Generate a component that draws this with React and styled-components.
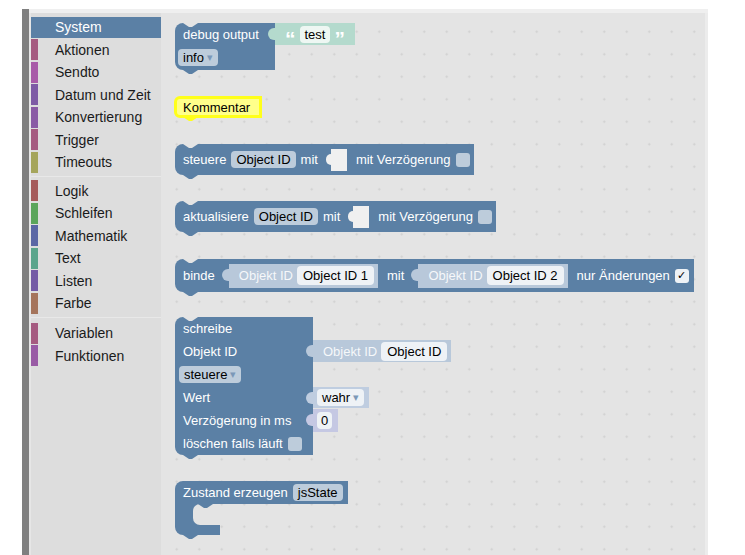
import React from 'react';
import styled, { createGlobalStyle, css } from 'styled-components';

const BLUE = '#5b80a5';
const WS = '#e4e4e4';
const FIELD = '#bdccdb';
const LIGHT_FIELD = '#eef2f6';
const SHADOW = '#b8c8da';

const Global = createGlobalStyle`
  html, body { margin: 0; padding: 0; background: #fff; }
  body { font-family: 'Liberation Sans', Arial, sans-serif; }
`;

const Frame = styled.div`
  display: flex;
  margin: 9px 0 0 22px;
  width: 686px;
  height: 546px;
`;
const LeftBar = styled.div`
  width: 7px;
  flex-shrink: 0;
  background: #808080;
`;
const Main = styled.div`
  flex: 1;
  display: flex;
  flex-direction: column;
`;
const TopStrip = styled.div`
  height: 4px;
  flex-shrink: 0;
  background: #efefef;
`;
const Content = styled.div`
  flex: 1;
  display: flex;
  min-height: 0;
`;
const Toolbox = styled.nav`
  width: 132px;
  flex-shrink: 0;
  box-sizing: border-box;
  background: #dddddd;
  border-left: 2px solid #e6e6e6;
  padding-top: 3.5px;
`;
const Category = styled.div`
  display: flex;
  align-items: center;
  height: 21px;
  margin-bottom: 1.5px;
  font-size: 14px;
  background: ${p => (p.$selected ? BLUE : 'transparent')};
  color: ${p => (p.$selected ? '#fff' : '#1a1a1a')};
`;
const Stripe = styled.span`
  width: 7px;
  align-self: stretch;
  margin-right: 17px;
  background: ${p => p.$color};
`;
const Separator = styled.div`
  height: 1px;
  margin: ${p => p.$top}px 0 ${p => p.$bottom}px 0;
  background: #e8e8e8;
`;

const Workspace = styled.main`
  flex: 1;
  position: relative;
  overflow: hidden;
  background-color: ${WS};
  background-image: radial-gradient(circle, #cfcfcf 0.8px, transparent 1.4px);
  background-size: 22.5px 22.5px;
  background-position: 4.5px 7.5px;
  box-shadow: inset -3px 0 0 #ececec;
`;

const Block = styled.div`
  position: absolute;
  left: ${p => p.$x}px;
  top: ${p => p.$y}px;
  display: flex;
  flex-direction: column;
  font-size: 13px;
  color: #fff;
`;
const Row = styled.div`
  display: flex;
  align-items: flex-start;
`;

const notchShape = 'polygon(0 0, 100% 0, 60% 100%, 40% 100%)';

const Body = styled.div`
  position: relative;
  box-sizing: border-box;
  display: flex;
  align-items: center;
  gap: 5px;
  flex-shrink: 0;
  white-space: nowrap;
  width: ${p => (p.$w ? `${p.$w}px` : 'auto')};
  height: ${p => p.$h}px;
  padding: 0 ${p => p.$pr ?? 5}px 0 ${p => p.$pl ?? 8}px;
  background: ${p => p.$color || BLUE};
  border-top-left-radius: ${p => (p.$first ? '8px' : '0')};
  border-bottom-left-radius: ${p => (p.$last ? '8px' : '0')};
  ${p =>
    p.$notch &&
    css`
      &::before {
        content: '';
        position: absolute;
        top: 0;
        left: 8px;
        width: 15px;
        height: 4px;
        background: ${WS};
        clip-path: ${notchShape};
      }
    `}
  ${p =>
    p.$tab &&
    css`
      &::after {
        content: '';
        position: absolute;
        bottom: -4px;
        left: ${p.$tabLeft ?? 8}px;
        width: 15px;
        height: 4px;
        background: ${p.$color || BLUE};
        clip-path: ${notchShape};
      }
    `}
`;

const CommentBody = styled(Body)`
  color: #000;
  border: 3px solid #ffff1a;
  border-radius: 6px 0 0 6px;
  &::after {
    bottom: -6px;
    left: 6px;
    background: #ffff1a;
  }
`;

const Field = styled.span`
  display: inline-flex;
  align-items: center;
  flex-shrink: 0;
  height: ${p => p.$h || 17}px;
  padding: 0 ${p => p.$px ?? 5}px;
  border-radius: 4px;
  background: ${p => p.$bg || FIELD};
  color: #000;
`;
const Arrow = styled.span`
  margin-left: 3px;
  font-size: 11px;
  color: #7b98b8;
`;
const Check = styled.span`
  display: inline-flex;
  align-items: center;
  justify-content: center;
  flex-shrink: 0;
  width: 14px;
  height: 14px;
  border-radius: 3px;
  font-size: 11px;
  color: #000;
  background: ${p => (p.$checked ? LIGHT_FIELD : FIELD)};
`;
const EmptyInput = styled.span`
  position: relative;
  flex-shrink: 0;
  width: 16px;
  height: 22px;
  margin: 0 4px 0 8px;
  background: #f0f0f0;
  &::before {
    content: '';
    position: absolute;
    left: -5px;
    top: 5px;
    width: 5px;
    height: 11px;
    background: #f0f0f0;
    border-radius: 5px 0 0 5px;
  }
`;
const Value = styled.span`
  position: relative;
  box-sizing: border-box;
  display: inline-flex;
  align-items: center;
  gap: 4px;
  flex-shrink: 0;
  white-space: nowrap;
  height: ${p => p.$h}px;
  padding: 0 ${p => p.$pr ?? 4}px 0 ${p => p.$pl ?? 10}px;
  margin: ${p => p.$mt ?? 0}px ${p => p.$mr ?? 0}px 0 ${p => p.$ml ?? 0}px;
  background: ${p => p.$bg};
  &::before {
    content: '';
    position: absolute;
    left: -7px;
    top: 5px;
    width: 7px;
    height: 12px;
    background: ${p => p.$bg};
    border-radius: 6px 0 0 6px;
  }
`;
const ShadowLabel = styled.span`
  color: rgba(255, 255, 255, 0.88);
`;
const Quote = styled.span`
  font-size: 21px;
  font-weight: bold;
  line-height: 1;
  color: #fff;
  transform: translateY(4px);
`;

const CRow = styled.div`
  display: flex;
  box-sizing: border-box;
  width: 45px;
  height: 21px;
  padding-left: 18px;
  background: ${BLUE};
`;
const Mouth = styled.div`
  flex: 1;
  background: ${WS};
  border-radius: 7px 0 0 7px;
`;

const categories = [
  ['System', BLUE, true],
  ['Aktionen', '#a55b80'],
  ['Sendto', '#a85ba8'],
  ['Datum und Zeit', '#7e5ba5'],
  ['Konvertierung', '#8a5ba5'],
  ['Trigger', '#a55b80'],
  ['Timeouts', '#a5a55b'],
  { sep: [3, 3.5] },
  ['Logik', '#a55b5b'],
  ['Schleifen', '#5ba55b'],
  ['Mathematik', '#5b67a5'],
  ['Text', '#5ba58c'],
  ['Listen', '#745ba5'],
  ['Farbe', '#a5745b'],
  { sep: [3.5, 4.5] },
  ['Variablen', '#a55b80'],
  ['Funktionen', '#995ba5'],
];

const ObjektIdShadow = ({ label, ml, mr, mt, h = 24 }) => (
  <Value $bg={SHADOW} $h={h} $ml={ml} $mr={mr} $mt={mt} $pl={10} $pr={4}>
    <ShadowLabel>Objekt ID</ShadowLabel>
    <Field $bg={LIGHT_FIELD} $h={19} $px={6}>{label}</Field>
  </Value>
);

export default function App() {
  return (
    <>
      <Global />
      <Frame>
        <LeftBar />
        <Main>
          <TopStrip />
          <Content>
            <Toolbox>
              {categories.map((c, i) =>
                c.sep ? (
                  <Separator key={i} $top={c.sep[0]} $bottom={c.sep[1]} />
                ) : (
                  <Category key={i} $selected={c[2]}>
                    <Stripe $color={c[1]} />
                    {c[0]}
                  </Category>
                )
              )}
            </Toolbox>
            <Workspace>
              {/* debug output */}
              <Block $x={14} $y={10}>
                <Row>
                  <Body $w={100} $h={22} $first $notch>
                    debug output
                  </Body>
                  <Value $bg="#b4dacd" $h={22} $pl={10} $pr={10}>
                    <Quote>“</Quote>
                    <Field $bg="#eef7f3" $h={17}>test</Field>
                    <Quote>”</Quote>
                  </Value>
                </Row>
                <Row>
                  <Body $w={100} $h={25} $pl={3} $last $tab>
                    <Field>
                      info<Arrow>▾</Arrow>
                    </Field>
                  </Body>
                </Row>
              </Block>

              {/* Kommentar */}
              <Block $x={13} $y={83}>
                <CommentBody $h={22} $color="#ffff8a" $pl={6} $pr={9} $first $last $tab>
                  Kommentar
                </CommentBody>
              </Block>

              {/* steuere */}
              <Block $x={14} $y={131}>
                <Body $h={31} $pr={4} $first $last $notch $tab>
                  steuere
                  <Field>Object ID</Field>
                  mit
                  <EmptyInput />
                  mit Verzögerung
                  <Check />
                </Body>
              </Block>

              {/* aktualisiere */}
              <Block $x={14} $y={188}>
                <Body $h={31} $pr={4} $first $last $notch $tab>
                  aktualisiere
                  <Field>Object ID</Field>
                  mit
                  <EmptyInput />
                  mit Verzögerung
                  <Check />
                </Body>
              </Block>

              {/* binde */}
              <Block $x={14} $y={246}>
                <Body $h={33} $pr={5} $first $last $notch $tab>
                  binde
                  <ObjektIdShadow label="Object ID 1" ml={9} mr={4} />
                  mit
                  <ObjektIdShadow label="Object ID 2" ml={9} mr={4} />
                  nur Änderungen
                  <Check $checked>✓</Check>
                </Body>
              </Block>

              {/* schreibe */}
              <Block $x={14} $y={304}>
                <Row>
                  <Body $w={138} $h={23} $first $notch>schreibe</Body>
                </Row>
                <Row>
                  <Body $w={138} $h={23}>Objekt ID</Body>
                  <ObjektIdShadow label="Object ID" h={22} mt={0} />
                </Row>
                <Row>
                  <Body $w={138} $h={23} $pl={4}>
                    <Field>
                      steuere<Arrow>▾</Arrow>
                    </Field>
                  </Body>
                </Row>
                <Row>
                  <Body $w={138} $h={22}>Wert</Body>
                  <Value $bg="#bfcde0" $h={21} $mt={1} $pl={4} $pr={5}>
                    <Field $bg={LIGHT_FIELD}>
                      wahr<Arrow>▾</Arrow>
                    </Field>
                  </Value>
                </Row>
                <Row>
                  <Body $w={138} $h={24}>Verzögerung in ms</Body>
                  <Value $bg="#c5c8e3" $h={23} $mt={1} $pl={4} $pr={6}>
                    <Field $bg={LIGHT_FIELD} $px={4}>0</Field>
                  </Value>
                </Row>
                <Row>
                  <Body $w={138} $h={23} $last $tab>
                    löschen falls läuft
                    <Check />
                  </Body>
                </Row>
              </Block>

              {/* Zustand erzeugen */}
              <Block $x={14} $y={468}>
                <Body $h={23} $pr={5} $first $tab $tabLeft={23}>
                  Zustand erzeugen
                  <Field>jsState</Field>
                </Body>
                <CRow>
                  <Mouth />
                </CRow>
                <Body $w={45} $h={10} $last $tab />
              </Block>
            </Workspace>
          </Content>
        </Main>
      </Frame>
    </>
  );
}
